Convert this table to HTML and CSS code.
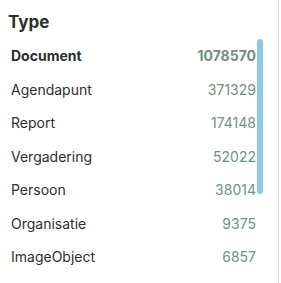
FILE: index.html
```html
<!DOCTYPE html>
<html>
<head>
<meta charset="utf-8">
<link rel="stylesheet" href="styles.css">
</head>
<body>
<div class="panel">
  <h2 class="title">Type</h2>
  <div class="list">
    <div class="row active"><span class="name">Document</span><span class="count">1078570</span></div>
    <div class="row"><span class="name">Agendapunt</span><span class="count">371329</span></div>
    <div class="row"><span class="name">Report</span><span class="count">174148</span></div>
    <div class="row"><span class="name">Vergadering</span><span class="count">52022</span></div>
    <div class="row"><span class="name">Persoon</span><span class="count">38014</span></div>
    <div class="row"><span class="name">Organisatie</span><span class="count">9375</span></div>
    <div class="row"><span class="name">ImageObject</span><span class="count">6857</span></div>
    <div class="thumb"></div>
  </div>
</div>
</body>
</html>
```
FILE: styles.css
```css
html, body {
  margin: 0;
  padding: 0;
  background: #fff;
}
body {
  font-family: Inter, "Noto Sans", sans-serif;
  color: #2b2f2e;
}
.panel {
  width: 278px;
  height: 283px;
  border-right: 1px solid #dcdcdc;
  box-sizing: content-box;
}
.title {
  margin: 0;
  padding: 11px 0 0 8px;
  font-size: 17px;
  font-weight: 700;
  line-height: 22px;
}
.list {
  position: relative;
  margin-top: 6px;
  padding: 0 22px 0 11px;
}
.row {
  display: flex;
  justify-content: space-between;
  align-items: center;
  height: 33.5px;
  font-size: 14px;
}
.count {
  color: #72907f;
}
.row.active {
  font-weight: 700;
}
.thumb {
  position: absolute;
  left: 257px;
  top: 0;
  width: 6px;
  height: 155px;
  border-radius: 3px;
  background: #8ecae6;
}
```
